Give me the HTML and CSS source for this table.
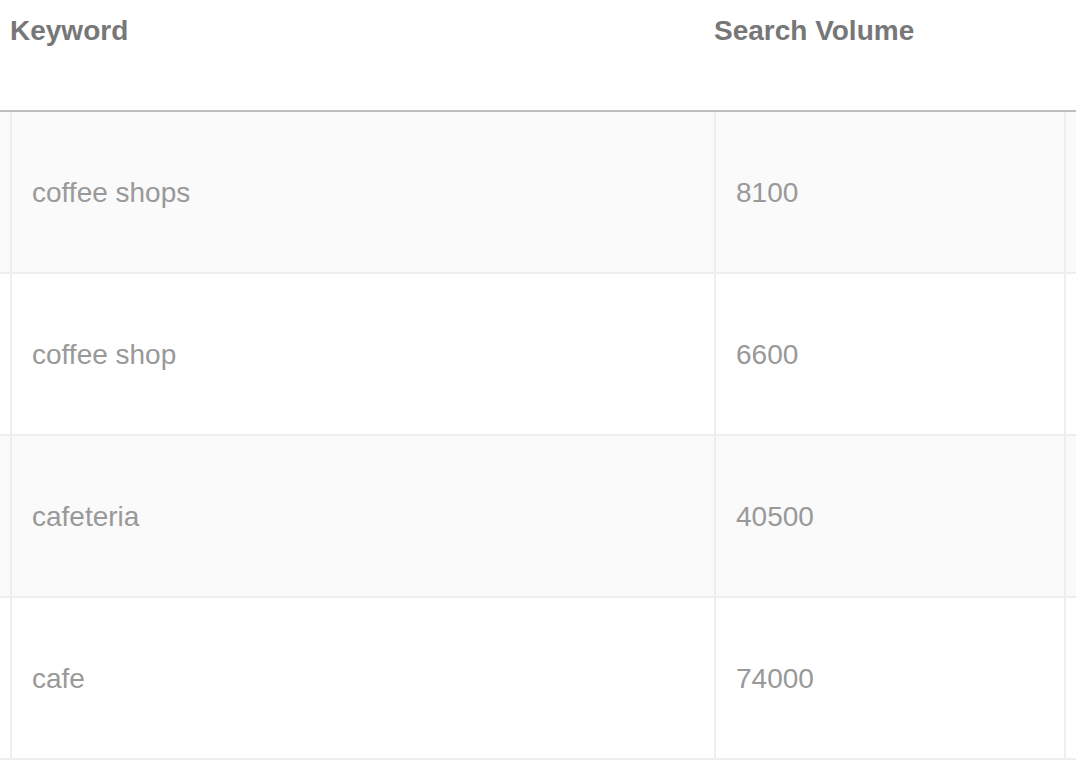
FILE: index.html
```html
<!DOCTYPE html>
<html>
<head>
<meta charset="utf-8">
<link rel="stylesheet" href="styles.css">
</head>
<body>
<div class="table">
  <div class="head">
    <div class="stub"></div>
    <div class="th th-key">Keyword</div>
    <div class="th th-vol">Search Volume</div>
  </div>
  <div class="row odd">
    <div class="stub"></div>
    <div class="td td-key">coffee shops</div>
    <div class="td td-vol">8100</div>
    <div class="rest"></div>
  </div>
  <div class="row">
    <div class="stub"></div>
    <div class="td td-key">coffee shop</div>
    <div class="td td-vol">6600</div>
    <div class="rest"></div>
  </div>
  <div class="row odd">
    <div class="stub"></div>
    <div class="td td-key">cafeteria</div>
    <div class="td td-vol">40500</div>
    <div class="rest"></div>
  </div>
  <div class="row">
    <div class="stub"></div>
    <div class="td td-key">cafe</div>
    <div class="td td-vol">74000</div>
    <div class="rest"></div>
  </div>
</div>
</body>
</html>
```

FILE: styles.css
```css
html, body {
  margin: 0;
  padding: 0;
  background: #ffffff;
}
body {
  font-family: "Liberation Sans", Arial, Helvetica, sans-serif;
  overflow: hidden;
}
.table {
  width: 1076px;
}
.head {
  display: flex;
  height: 110px;
  border-bottom: 2px solid #bdbdbd;
}
.head .stub {
  width: 10px;
  flex: none;
}
.th {
  flex: none;
  box-sizing: border-box;
  padding-top: 15px;
  font-size: 28px;
  font-weight: bold;
  line-height: 32px;
  color: #777777;
}
.th-key {
  width: 704px;
}
.th-vol {
  width: 350px;
}
.row {
  display: flex;
  height: 160px;
  border-bottom: 2px solid #eeeeee;
  background: #ffffff;
}
.row.odd {
  background: #fafafa;
}
.row .stub {
  width: 10px;
  flex: none;
  border-right: 2px solid #eeeeee;
}
.td {
  flex: none;
  box-sizing: border-box;
  display: flex;
  align-items: center;
  padding-left: 20px;
  padding-top: 2px;
  font-size: 28px;
  color: #999999;
  border-right: 2px solid #eeeeee;
}
.td-key {
  width: 704px;
}
.td-vol {
  width: 350px;
}
.rest {
  flex: 1;
}
```
